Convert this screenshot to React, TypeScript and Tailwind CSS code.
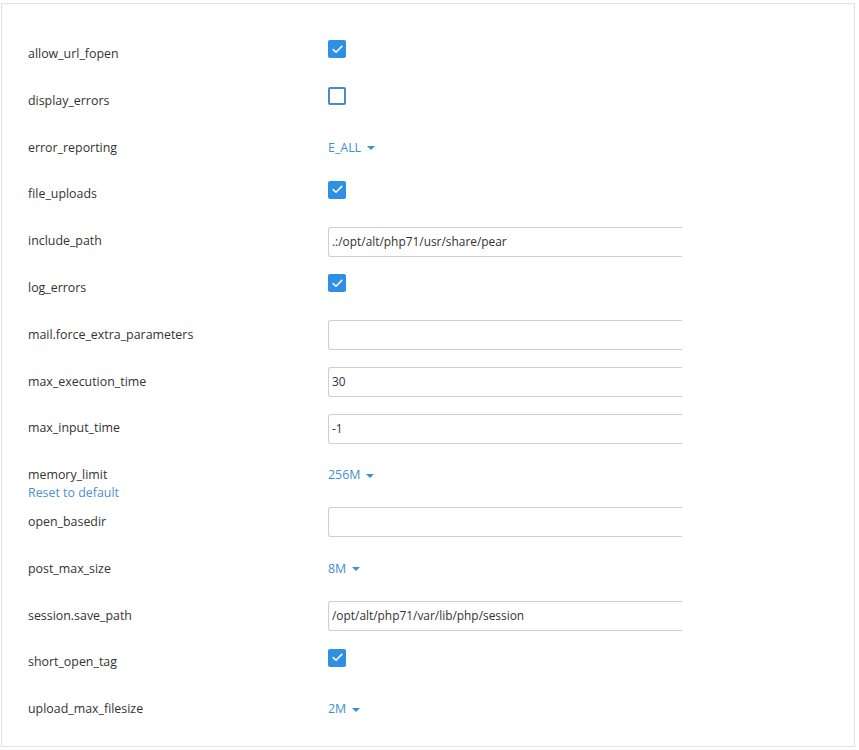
import React from 'react';

type Row =
  | { name: string; kind: 'check'; checked: boolean }
  | { name: string; kind: 'select'; value: string; reset?: boolean }
  | { name: string; kind: 'text'; value: string };

const rows: Row[] = [
  { name: 'allow_url_fopen', kind: 'check', checked: true },
  { name: 'display_errors', kind: 'check', checked: false },
  { name: 'error_reporting', kind: 'select', value: 'E_ALL' },
  { name: 'file_uploads', kind: 'check', checked: true },
  { name: 'include_path', kind: 'text', value: '.:/opt/alt/php71/usr/share/pear' },
  { name: 'log_errors', kind: 'check', checked: true },
  { name: 'mail.force_extra_parameters', kind: 'text', value: '' },
  { name: 'max_execution_time', kind: 'text', value: '30' },
  { name: 'max_input_time', kind: 'text', value: '-1' },
  { name: 'memory_limit', kind: 'select', value: '256M', reset: true },
  { name: 'open_basedir', kind: 'text', value: '' },
  { name: 'post_max_size', kind: 'select', value: '8M' },
  { name: 'session.save_path', kind: 'text', value: '/opt/alt/php71/var/lib/php/session' },
  { name: 'short_open_tag', kind: 'check', checked: true },
  { name: 'upload_max_filesize', kind: 'select', value: '2M' },
];

function Checkbox({ checked }: { checked: boolean }) {
  if (checked) {
    return (
      <span className="flex h-[18px] w-[18px] items-center justify-center rounded-[2px] bg-[#2f8fe3] -mt-[10px]">
        <svg width="11" height="9" viewBox="0 0 11 9" fill="none">
          <path d="M1.2 4.6 L4 7.3 L9.8 1.4" stroke="white" strokeWidth="1.5" strokeLinecap="round" strokeLinejoin="round" />
        </svg>
      </span>
    );
  }
  return <span className="block h-[18px] w-[18px] rounded-[2px] border-2 border-[#4a8bc4] bg-white -mt-[10px]" />;
}

function Select({ value }: { value: string }) {
  return (
    <span className="flex items-center gap-[6px] text-[12.4px] text-[#3d8fd4]">
      {value}
      <span className="h-0 w-0 border-x-[4px] border-t-[4px] border-x-transparent border-t-[#3d8fd4]" />
    </span>
  );
}

export default function App() {
  return (
    <div className="h-[750px] w-[859px] bg-white pt-[3px] pl-[1px]" style={{ fontFamily: '"Open Sans", sans-serif' }}>
      <div className="h-[744px] w-[854px] overflow-hidden border border-[#e3e3e3] pt-[27px]">
        {rows.map((r) => (
          <div key={r.name} className="relative flex h-[46.8px] items-center">
            <div className="w-[326px] shrink-0 pl-[26px] text-[12.4px] text-[#333]">
              {r.name}
              {r.kind === 'select' && r.reset && (
                <span className="absolute left-[26px] top-[32px] text-[12.4px] text-[#4b92cf]">Reset to default</span>
              )}
            </div>
            <div className="flex flex-1 items-center">
              {r.kind === 'check' && <Checkbox checked={r.checked} />}
              {r.kind === 'select' && <Select value={r.value} />}
              {r.kind === 'text' && (
                <div className="flex h-[30px] w-[354px] items-center rounded-l-[3px] border border-r-0 border-[#cfcfcf] pl-[3px] text-[11.9px] text-[#333]">
                  {r.value}
                </div>
              )}
            </div>
          </div>
        ))}
      </div>
    </div>
  );
}
